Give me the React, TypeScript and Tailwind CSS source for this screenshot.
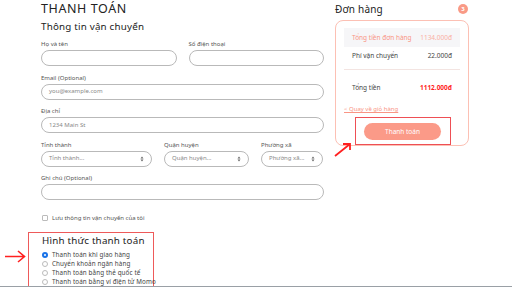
import React from "react";

const font = { fontFamily: '"Noto Sans", "Open Sans", sans-serif' };

function Field({ label, placeholder, select }: { label: string; placeholder?: string; select?: boolean }) {
  return (
    <div className="flex flex-col">
      <div className="text-[6px] leading-[8px] text-[#555] mb-[2px]">{label}</div>
      <div className="h-[16px] rounded-full border border-[#b9b9b9] px-[7px] flex items-center justify-between text-[6px] text-[#888]">
        <span>{placeholder}</span>
        {select && (
          <svg width="4" height="6" viewBox="0 0 4 6" className="shrink-0">
            <path d="M2 0.5 L3.5 2.4 H0.5 Z M2 5.5 L3.5 3.6 H0.5 Z" fill="#666" />
          </svg>
        )}
      </div>
    </div>
  );
}

export default function App() {
  return (
    <div className="w-[512px] h-[287px] bg-white overflow-hidden relative border-b border-[#9aa0a6] text-[#333]" style={font}>
      <div className="flex gap-[11px] pl-[41px]">
        {/* Left column */}
        <div className="w-[283px] flex flex-col pt-[1px]">
          <div className="text-[12.5px] leading-[16px] text-[#222] tracking-[0.6px]">THANH TOÁN</div>
          <div className="text-[9.8px] leading-[14px] mt-[3px] text-[#222] tracking-[0.2px]">Thông tin vận chuyển</div>
          <div className="flex flex-col gap-y-[7.5px] mt-[6px]">
            <div className="grid grid-cols-2 gap-x-[12px]">
              <Field label="Họ và tên" />
              <Field label="Số điện thoại" />
            </div>
            <Field label="Email (Optional)" placeholder="you@example.com" />
            <Field label="Địa chỉ" placeholder="1234 Main St" />
            <div className="grid grid-cols-[111px_85px_62px] gap-x-[12px]">
              <Field label="Tỉnh thành" placeholder="Tỉnh thành..." select />
              <Field label="Quận huyện" placeholder="Quận huyện..." select />
              <Field label="Phường xã" placeholder="Phường xã..." select />
            </div>
            <Field label="Ghi chú (Optional)" />
          </div>
          <div className="flex items-center gap-[4px] mt-[14px] ml-[1px]">
            <div className="w-[6px] h-[6px] border border-[#bbb] rounded-[1px]" />
            <span className="text-[6px] leading-[8px] text-[#555]">Lưu thông tin vận chuyển của tôi</span>
          </div>
          <div className="w-[126px] h-[56px] -ml-[13px] pl-[13px] mt-[10px] border border-[#ee5a5a] border-b-0 pt-[1px]">
            <div className="text-[9.8px] leading-[13px] text-[#222] tracking-[0.2px]">Hình thức thanh toán</div>
            <div className="flex flex-col mt-[3px]">
              {[
                "Thanh toán khi giao hàng",
                "Chuyển khoản ngân hàng",
                "Thanh toán bằng thẻ quốc tế",
                "Thanh toán bằng ví điện tử Momo",
              ].map((t, i) => (
                <div key={t} className="flex items-center gap-[4px] h-[9px] whitespace-nowrap">
                  {i === 0 ? (
                    <div className="w-[6px] h-[6px] rounded-full bg-[#1a73e8] flex items-center justify-center shrink-0">
                      <div className="w-[2px] h-[2px] rounded-full bg-white" />
                    </div>
                  ) : (
                    <div className="w-[6px] h-[6px] rounded-full border border-[#bbb] shrink-0" />
                  )}
                  <span className="text-[6.3px] leading-[9px] text-[#444] tracking-[0.1px]">{t}</span>
                </div>
              ))}
            </div>
          </div>
        </div>

        {/* Right column */}
        <div className="w-[134px] flex flex-col pt-[1px]">
          <div className="flex items-center justify-between h-[16px] pr-[1px]">
            <span className="text-[10px] leading-[14px] text-[#222] tracking-[0.2px]">Đơn hàng</span>
            <span className="w-[10px] h-[10px] rounded-full bg-[#f99a86] text-white text-[6px] font-bold flex items-center justify-center">3</span>
          </div>
          <div className="mt-[3px] h-[126px] border border-[#fcc0b4] rounded-[8px] px-[8px] pt-[7px] flex flex-col">
            <div className="h-[19px] bg-[#f6f6f8] px-[8px] flex items-center justify-between text-[6.5px]">
              <span className="text-[#f99585]">Tổng tiền đơn hàng</span>
              <span className="text-[#fab0a4]">1134.000đ</span>
            </div>
            <div className="h-[17px] px-[8px] flex items-center justify-between text-[6.5px] text-[#444]">
              <span>Phí vận chuyển</span>
              <span>22.000đ</span>
            </div>
            <div className="h-[1px] bg-[#f3e4e1] mt-[5px]" />
            <div className="h-[16px] mt-[10px] px-[8px] flex items-center justify-between text-[6.5px] text-[#444]">
              <span>Tổng tiền</span>
              <span className="text-[#ff1f1f] font-bold">1112.000đ</span>
            </div>
            <div className="h-[8px] mt-[9px] text-[6px] leading-[8px] text-[#f99585] underline">&lt; Quay về giỏ hàng</div>
            <div className="ml-[11px] mt-[4px] w-[96px] h-[28px] border border-[#ee4f55] pt-[5px] pl-[8px]">
              <div className="w-[77px] h-[17px] rounded-full bg-[#fb9a88] text-white text-[6.5px] flex items-center justify-center">Thanh toán</div>
            </div>
          </div>
        </div>
      </div>

      {/* annotation arrows */}
      <svg className="absolute left-[4px] top-[250px]" width="22" height="13" viewBox="0 0 22 13">
        <path d="M1 6.5 H20 M14 1 L20.5 6.5 L14 12" stroke="#ff2020" strokeWidth="1.6" fill="none" />
      </svg>
      <svg className="absolute left-[333px] top-[142px]" width="19" height="15" viewBox="0 0 19 15">
        <path d="M2 14 L17 2 M10 2 H17 V8" stroke="#ff2020" strokeWidth="1.8" fill="none" />
      </svg>
    </div>
  );
}
